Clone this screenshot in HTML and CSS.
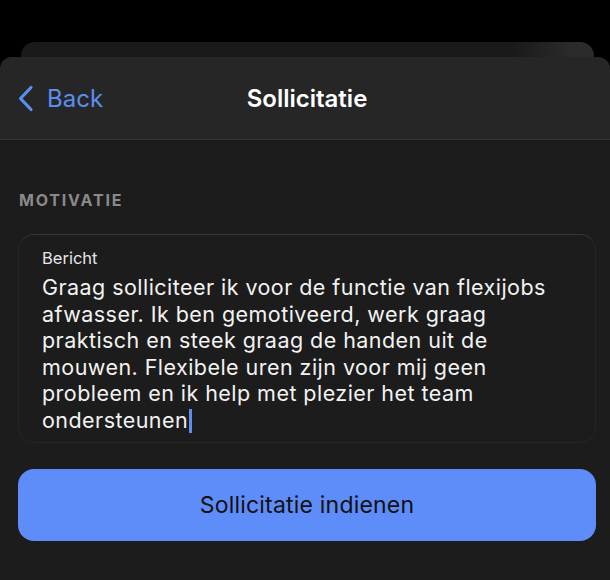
FILE: index.html
```html
<!DOCTYPE html>
<html lang="nl">

<head>
    <meta charset="UTF-8">
    <meta name="viewport" content="width=device-width, initial-scale=1.0">
    <title>Sollicitatie</title>
    <link rel="stylesheet" href="styles.css">
</head>

<body>
    <div class="achterkaart"></div>
    <main class="blad">
        <header class="navbalk">
            <a class="terug" href="#">
                <svg width="17" height="27" viewBox="0 0 17 27">
                    <path d="M14 2.5 L3.5 13.5 L14 24.5" fill="none" stroke="currentColor" stroke-width="3.2" stroke-linecap="round" stroke-linejoin="round"/>
                </svg>
                <span>Back</span>
            </a>
            <h1>Sollicitatie</h1>
        </header>
        <section class="inhoud">
            <p class="kop">Motivatie</p>
            <div class="veld">
                <label for="bericht">Bericht</label>
                <!-- regels breken zoals in het tekstveld -->
                <p class="tekst" id="bericht">Graag solliciteer ik voor de functie van flexijobs<br>afwasser. Ik ben gemotiveerd, werk graag<br>praktisch en steek graag de handen uit de<br>mouwen. Flexibele uren zijn voor mij geen<br>probleem en ik help met plezier het team<br>ondersteunen<span class="cursor"></span></p>
            </div>
            <button class="indienen">Sollicitatie indienen</button>
        </section>
    </main>
</body>

</html>
```

FILE: styles.css
```css
body {
    background-color: #000;
    font-family: Inter, Roboto, "Liberation Sans", sans-serif;
    height: 580px;
    margin: 0;
    overflow: hidden;
}

.achterkaart {
    background: linear-gradient(to right, #1a1a1a 86%, #2b2b2b 96%);
    border-radius: 14px 14px 0 0;
    height: 15px;
    margin: 42px 16px 0 21px;
}

.blad {
    background-color: #1c1c1c;
    border-radius: 12px 12px 0 0;
    height: 523px;
    overflow: hidden;
}

.navbalk {
    align-items: center;
    background-color: #262626;
    border-bottom: 1px solid #333;
    display: flex;
    height: 82px;
    justify-content: center;
    position: relative;
}

.terug {
    align-items: center;
    color: #5b8ef0;
    display: flex;
    font-size: 24px;
    gap: 13px;
    left: 17px;
    position: absolute;
    text-decoration: none;
    top: 27px;
}

.navbalk h1 {
    color: #fff;
    font-size: 24px;
    font-weight: 600;
    margin: 0 0 0 4px;
}

.inhoud {
    padding: 0 14px 0 18px;
}

.kop {
    color: #8a8a8a;
    font-size: 16px;
    font-weight: 700;
    letter-spacing: 1.8px;
    margin: 50px 0 0 1px;
    text-transform: uppercase;
}

.veld {
    border: 1px solid #262626;
    border-top-color: #363636;
    border-radius: 16px;
    box-sizing: border-box;
    height: 209px;
    margin-top: 24px;
    padding: 13px 10px 0 23px;
}

.veld label {
    color: #e6e6e6;
    display: block;
    font-size: 16.5px;
}

.tekst {
    color: #f2f2f2;
    font-size: 21.5px;
    letter-spacing: 0.45px;
    line-height: 26.6px;
    margin: 6px 0 0;
    white-space: nowrap;
}

.cursor {
    background-color: #5b8ef0;
    display: inline-block;
    height: 24px;
    margin-left: 1px;
    vertical-align: -5px;
    width: 3px;
}

.indienen {
    background-color: #5e8cf8;
    border: none;
    border-radius: 16px;
    color: #111;
    font-family: inherit;
    font-size: 23px;
    height: 72px;
    letter-spacing: 0.2px;
    margin-top: 26px;
    width: 578px;
}
```
